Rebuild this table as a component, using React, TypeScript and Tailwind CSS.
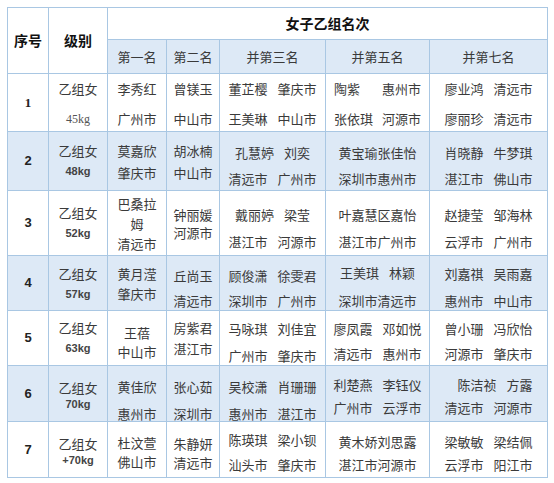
type Cell = {
  lines: string[][];
  lead: string;
  pt: string;
  mode?: "center" | "between" | "end";
};

type Row = {
  no: string;
  serifNo?: boolean;
  serifWeight?: boolean;
  blue: boolean;
  h: string;
  inner: string;
  cells: Cell[];
};

const c = (
  lines: string[][],
  lead: string,
  pt: string,
  mode: Cell["mode"] = "center"
): Cell => ({ lines, lead, pt, mode });

const rows: Row[] = [
  {
    no: "1",
    serifNo: true,
    serifWeight: true,
    blue: false,
    h: "h-[58px]",
    inner: "h-[57px]",
    cells: [
      c([["乙组女"], ["45kg"]], "leading-[30px]", "pt-[0px]"),
      c([["李秀红"], ["广州市"]], "leading-[30px]", "pt-[0px]"),
      c([["曾镁玉"], ["中山市"]], "leading-[30px]", "pt-[0px]"),
      c([["董芷樱", "肇庆市"], ["王美琳", "中山市"]], "leading-[30px]", "pt-[0px]"),
      c([["陶紫", "惠州市"], ["张依琪", "河源市"]], "leading-[30px]", "pt-[0px]", "between"),
      c([["廖业鸿", "清远市"], ["廖丽珍", "清远市"]], "leading-[30px]", "pt-[0px]"),
    ],
  },
  {
    no: "2",
    blue: true,
    h: "h-[59px]",
    inner: "h-[58px]",
    cells: [
      c([["乙组女"], ["48kg"]], "leading-[20px]", "pt-[9px]"),
      c([["莫嘉欣"], ["肇庆市"]], "leading-[22px]", "pt-[8px]"),
      c([["胡冰楠"], ["中山市"]], "leading-[22px]", "pt-[8px]"),
      c([["孔慧婷", "刘奕"], ["清远市", "广州市"]], "leading-[26px]", "pt-[8px]"),
      c([["黄宝瑜张佳怡"], ["深圳市惠州市"]], "leading-[26px]", "pt-[8px]"),
      c([["肖晓静", "牛梦琪"], ["湛江市", "佛山市"]], "leading-[26px]", "pt-[8px]"),
    ],
  },
  {
    no: "3",
    blue: false,
    h: "h-[65px]",
    inner: "h-[64px]",
    cells: [
      c([["乙组女"], ["52kg"]], "leading-[20px]", "pt-[12px]"),
      c([["巴桑拉"], ["姆"], ["清远市"]], "leading-[20px]", "pt-[3px]"),
      c([["钟丽媛"], ["河源市"]], "leading-[18px]", "pt-[15px]"),
      c([["戴丽婷", "梁莹"], ["湛江市", "河源市"]], "leading-[27px]", "pt-[10px]"),
      c([["叶嘉慧区嘉怡"], ["湛江市广州市"]], "leading-[27px]", "pt-[10px]"),
      c([["赵捷莹", "邹海林"], ["云浮市", "广州市"]], "leading-[27px]", "pt-[10px]"),
    ],
  },
  {
    no: "4",
    blue: true,
    h: "h-[55px]",
    inner: "h-[54px]",
    cells: [
      c([["乙组女"], ["57kg"]], "leading-[20px]", "pt-[8px]"),
      c([["黄月滢"], ["肇庆市"]], "leading-[20px]", "pt-[8px]"),
      c([["丘尚玉"], ["清远市"]], "leading-[25px]", "pt-[7px]"),
      c([["顾俊潇", "徐雯君"], ["深圳市", "广州市"]], "leading-[25px]", "pt-[7px]"),
      c([["王美琪", "林颖"], ["深圳市清远市"]], "leading-[28px]", "pt-[3px]"),
      c([["刘嘉祺", "吴雨嘉"], ["惠州市", "中山市"]], "leading-[27px]", "pt-[4px]"),
    ],
  },
  {
    no: "5",
    blue: false,
    h: "h-[55px]",
    inner: "h-[54px]",
    cells: [
      c([["乙组女"], ["63kg"]], "leading-[20px]", "pt-[7px]"),
      c([["王蓓"], ["中山市"]], "leading-[19px]", "pt-[12px]"),
      c([["房紫君"], ["湛江市"]], "leading-[21px]", "pt-[6px]"),
      c([["马咏琪", "刘佳宜"], ["广州市", "肇庆市"]], "leading-[27px]", "pt-[4px]"),
      c([["廖凤霞", "邓如悦"], ["清远市", "惠州市"]], "leading-[25px]", "pt-[5px]"),
      c([["曾小珊", "冯欣怡"], ["河源市", "肇庆市"]], "leading-[25px]", "pt-[5px]"),
    ],
  },
  {
    no: "6",
    blue: true,
    h: "h-[56px]",
    inner: "h-[55px]",
    cells: [
      c([["乙组女"], ["70kg"]], "leading-[16px]", "pt-[14px]"),
      c([["黄佳欣"], ["惠州市"]], "leading-[27px]", "pt-[7px]"),
      c([["张心茹"], ["深圳市"]], "leading-[27px]", "pt-[7px]"),
      c([["吴校潇", "肖珊珊"], ["惠州市", "湛江市"]], "leading-[27px]", "pt-[7px]"),
      c([["利楚燕", "李钰仪"], ["广州市", "云浮市"]], "leading-[23px]", "pt-[7px]"),
      c([["陈洁祯", "方露"], ["清远市", "河源市"]], "leading-[23px]", "pt-[7px]", "end"),
    ],
  },
  {
    no: "7",
    blue: false,
    h: "h-[56px]",
    inner: "h-[55px]",
    cells: [
      c([["乙组女"], ["+70kg"]], "leading-[16px]", "pt-[14px]"),
      c([["杜汶萱"], ["佛山市"]], "leading-[19px]", "pt-[11px]"),
      c([["朱静妍"], ["清远市"]], "leading-[19px]", "pt-[12px]"),
      c([["陈瑛琪", "梁小钡"], ["汕头市", "肇庆市"]], "leading-[25px]", "pt-[5px]"),
      c([["黄木娇刘思露"], ["湛江市河源市"]], "leading-[23px]", "pt-[8px]"),
      c([["梁敏敏", "梁结佩"], ["云浮市", "阳江市"]], "leading-[23px]", "pt-[8px]"),
    ],
  },
];

const font = "font-['Noto_Sans_CJK_SC','Noto_Sans',sans-serif]";
const td = "border border-[#a9c7e3] p-0";

function Lines({
  cell,
  inner,
  isWeight,
  serifWeight,
}: {
  cell: Cell;
  inner: string;
  isWeight?: boolean;
  serifWeight?: boolean;
}) {
  const mode = cell.mode ?? "center";
  return (
    <div className={`flex justify-center overflow-visible ${inner} ${cell.pt}`}>
      <div
        className={`inline-flex h-fit flex-col ${
          mode === "between" ? "items-stretch" : mode === "end" ? "items-end" : "items-center"
        } ${cell.lead}`}
      >
        {cell.lines.map((line, i) => {
          if (isWeight && i === 1) {
            return (
              <div
                key={i}
                className={
                  serifWeight
                    ? "font-['Liberation_Serif',serif] text-[12px] text-[#555]"
                    : "font-['Liberation_Sans',sans-serif] font-bold text-[11px] text-[#444]"
                }
              >
                {line[0]}
              </div>
            );
          }
          return (
            <div
              key={i}
              className={`flex whitespace-nowrap ${
                mode === "between" ? "justify-between gap-[9px]" : "justify-center gap-[10px]"
              }`}
            >
              {line.map((p, j) => (
                <span key={j}>{p}</span>
              ))}
            </div>
          );
        })}
      </div>
    </div>
  );
}

export default function App() {
  return (
    <div className={`min-h-screen bg-white pt-[7px] pl-[7px] ${font} text-[13px] text-[#3a3a3a]`}>
      <table className="w-[541px] table-fixed border-collapse">
        <colgroup>
          <col className="w-[41px]" />
          <col className="w-[59px]" />
          <col className="w-[59px]" />
          <col className="w-[53px]" />
          <col className="w-[106px]" />
          <col className="w-[104px]" />
          <col className="w-[118px]" />
        </colgroup>
        <thead>
          <tr className="h-[32px]">
            <th rowSpan={2} className={`${td} font-bold text-[14px] text-[#111]`}>
              序号
            </th>
            <th rowSpan={2} className={`${td} font-bold text-[14px] text-[#111]`}>
              级别
            </th>
            <th colSpan={5} className={`${td} font-bold text-[14px] text-[#111]`}>
              女子乙组名次
            </th>
          </tr>
          <tr className="h-[34px] bg-[#dde9f6]">
            {["第一名", "第二名", "并第三名", "并第五名", "并第七名"].map((t) => (
              <th key={t} className={`${td} font-normal`}>
                {t}
              </th>
            ))}
          </tr>
        </thead>
        <tbody>
          {rows.map((r) => (
            <tr key={r.no} className={`${r.h} ${r.blue ? "bg-[#dde9f6]" : "bg-white"}`}>
              <td
                className={`${td} text-center align-middle font-bold text-[13px] leading-[16px] text-[#222] ${
                  r.serifNo ? "font-['Liberation_Serif',serif]" : "font-['Liberation_Sans',sans-serif]"
                }`}
              >
                {r.no}
              </td>
              {r.cells.map((cell, i) => (
                <td key={i} className={`${td} align-top`}>
                  <Lines cell={cell} inner={r.inner} isWeight={i === 0} serifWeight={r.serifWeight} />
                </td>
              ))}
            </tr>
          ))}
        </tbody>
      </table>
    </div>
  );
}
